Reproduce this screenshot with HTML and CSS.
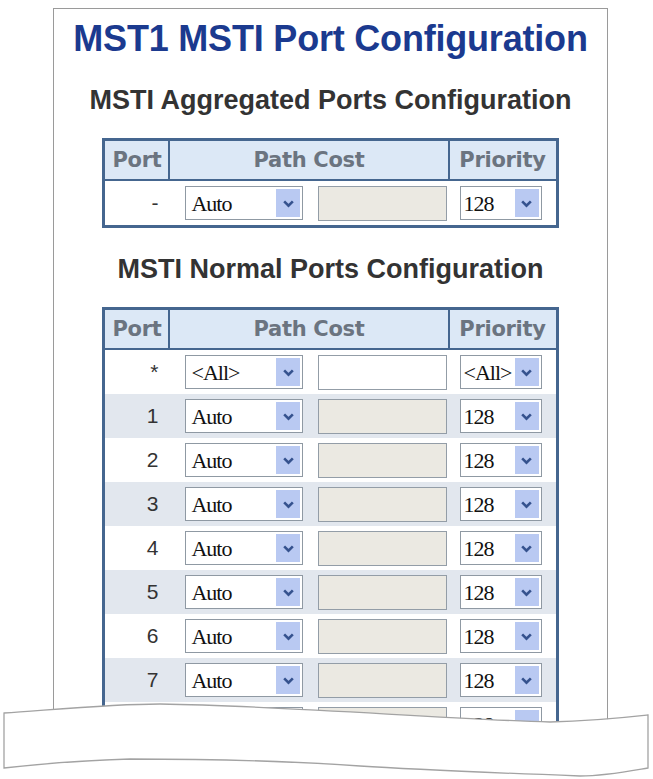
FILE: index.html
```html
<!DOCTYPE html>
<html lang="en">
<head>
  <meta charset="UTF-8">
  <meta name="viewport" content="width=device-width, initial-scale=1.0">
  <title>MST1 MSTI Port Configuration</title>
  <link rel="stylesheet" href="styles.css">
</head>
<body>
  <!-- page frame -->
  <div class="frame">
    <h1 class="title">MST1 MSTI Port Configuration</h1>

    <h2 class="subtitle">MSTI Aggregated Ports Configuration</h2>
    <table class="config">
      <colgroup>
        <col class="c-port"><col class="c-mode"><col class="c-value"><col class="c-prio">
      </colgroup>
      <thead>
        <tr><th>Port</th><th colspan="2">Path Cost</th><th class="last">Priority</th></tr>
      </thead>
      <tbody>
        <tr>
          <td class="port">-</td>
          <td class="mode"><div class="select wide"><span>Auto</span><i class="arrow"><svg viewBox="0 0 12 10"><path d="M2 3 L6 7 L10 3"/></svg></i></div></td>
          <td class="value"><div class="input off"></div></td>
          <td class="prio"><div class="select narrow"><span>128</span><i class="arrow"><svg viewBox="0 0 12 10"><path d="M2 3 L6 7 L10 3"/></svg></i></div></td>
        </tr>
      </tbody>
    </table>

    <h2 class="subtitle">MSTI Normal Ports Configuration</h2>
    <table class="config">
      <colgroup>
        <col class="c-port"><col class="c-mode"><col class="c-value"><col class="c-prio">
      </colgroup>
      <thead>
        <tr><th>Port</th><th colspan="2">Path Cost</th><th class="last">Priority</th></tr>
      </thead>
      <tbody>
        <tr>
          <td class="port star">*</td>
          <td class="mode"><div class="select wide"><span>&lt;All&gt;</span><i class="arrow"><svg viewBox="0 0 12 10"><path d="M2 3 L6 7 L10 3"/></svg></i></div></td>
          <td class="value"><div class="input"></div></td>
          <td class="prio"><div class="select narrow"><span>&lt;All&gt;</span><i class="arrow"><svg viewBox="0 0 12 10"><path d="M2 3 L6 7 L10 3"/></svg></i></div></td>
        </tr>
        <tr class="alt">
          <td class="port">1</td>
          <td class="mode"><div class="select wide"><span>Auto</span><i class="arrow"><svg viewBox="0 0 12 10"><path d="M2 3 L6 7 L10 3"/></svg></i></div></td>
          <td class="value"><div class="input off"></div></td>
          <td class="prio"><div class="select narrow"><span>128</span><i class="arrow"><svg viewBox="0 0 12 10"><path d="M2 3 L6 7 L10 3"/></svg></i></div></td>
        </tr>
        <tr>
          <td class="port">2</td>
          <td class="mode"><div class="select wide"><span>Auto</span><i class="arrow"><svg viewBox="0 0 12 10"><path d="M2 3 L6 7 L10 3"/></svg></i></div></td>
          <td class="value"><div class="input off"></div></td>
          <td class="prio"><div class="select narrow"><span>128</span><i class="arrow"><svg viewBox="0 0 12 10"><path d="M2 3 L6 7 L10 3"/></svg></i></div></td>
        </tr>
        <tr class="alt">
          <td class="port">3</td>
          <td class="mode"><div class="select wide"><span>Auto</span><i class="arrow"><svg viewBox="0 0 12 10"><path d="M2 3 L6 7 L10 3"/></svg></i></div></td>
          <td class="value"><div class="input off"></div></td>
          <td class="prio"><div class="select narrow"><span>128</span><i class="arrow"><svg viewBox="0 0 12 10"><path d="M2 3 L6 7 L10 3"/></svg></i></div></td>
        </tr>
        <tr>
          <td class="port">4</td>
          <td class="mode"><div class="select wide"><span>Auto</span><i class="arrow"><svg viewBox="0 0 12 10"><path d="M2 3 L6 7 L10 3"/></svg></i></div></td>
          <td class="value"><div class="input off"></div></td>
          <td class="prio"><div class="select narrow"><span>128</span><i class="arrow"><svg viewBox="0 0 12 10"><path d="M2 3 L6 7 L10 3"/></svg></i></div></td>
        </tr>
        <tr class="alt">
          <td class="port">5</td>
          <td class="mode"><div class="select wide"><span>Auto</span><i class="arrow"><svg viewBox="0 0 12 10"><path d="M2 3 L6 7 L10 3"/></svg></i></div></td>
          <td class="value"><div class="input off"></div></td>
          <td class="prio"><div class="select narrow"><span>128</span><i class="arrow"><svg viewBox="0 0 12 10"><path d="M2 3 L6 7 L10 3"/></svg></i></div></td>
        </tr>
        <tr>
          <td class="port">6</td>
          <td class="mode"><div class="select wide"><span>Auto</span><i class="arrow"><svg viewBox="0 0 12 10"><path d="M2 3 L6 7 L10 3"/></svg></i></div></td>
          <td class="value"><div class="input off"></div></td>
          <td class="prio"><div class="select narrow"><span>128</span><i class="arrow"><svg viewBox="0 0 12 10"><path d="M2 3 L6 7 L10 3"/></svg></i></div></td>
        </tr>
        <tr class="alt">
          <td class="port">7</td>
          <td class="mode"><div class="select wide"><span>Auto</span><i class="arrow"><svg viewBox="0 0 12 10"><path d="M2 3 L6 7 L10 3"/></svg></i></div></td>
          <td class="value"><div class="input off"></div></td>
          <td class="prio"><div class="select narrow"><span>128</span><i class="arrow"><svg viewBox="0 0 12 10"><path d="M2 3 L6 7 L10 3"/></svg></i></div></td>
        </tr>
        <tr>
          <td class="port">8</td>
          <td class="mode"><div class="select wide"><span>Auto</span><i class="arrow"><svg viewBox="0 0 12 10"><path d="M2 3 L6 7 L10 3"/></svg></i></div></td>
          <td class="value"><div class="input off"></div></td>
          <td class="prio"><div class="select narrow"><span>128</span><i class="arrow"><svg viewBox="0 0 12 10"><path d="M2 3 L6 7 L10 3"/></svg></i></div></td>
        </tr>
      </tbody>
    </table>
  </div>

  <!-- torn paper edge over the bottom -->
  <svg class="torn" viewBox="0 0 653 79">
    <path d="M4 13 C50 10 110 4 160 4 C290 6 440 19 550 22 C595 21 630 17 648 15 L648 68 C625 72 605 76 580 76 C500 73 420 70 360 66 C290 61 210 59 130 59 C70 61 30 65 4 68 Z"/>
  </svg>
</body>
</html>
```

FILE: styles.css
```css
* {
  margin: 0;
  padding: 0;
  box-sizing: border-box;
}

body {
  font-family: "Liberation Sans", Arial, sans-serif;
  background: #fff;
  color: #333;
  width: 653px;
  height: 779px;
  overflow: hidden;
  position: relative;
}

/* 页面框 */
.frame {
  margin: 8px 0 0 53px;
  width: 555px;
  height: 740px;
  border: 1px solid #9a9a9a;
  border-bottom: none;
  padding-top: 10px;
  overflow: hidden;
}

.title {
  font-size: 36px;
  line-height: 40px;
  font-weight: bold;
  color: #1b3a8f;
  text-align: center;
  letter-spacing: -0.2px;
}

.subtitle {
  font-size: 27px;
  line-height: 32px;
  font-weight: bold;
  color: #333;
  text-align: center;
  margin-top: 25px;
}

/* 配置表 */
.config {
  width: 456px;
  margin: 22px auto 0;
  border: 3px solid #45668f;
  border-spacing: 0;
  table-layout: fixed;
}

.c-port { width: 65px; }
.c-mode { width: 141px; }
.c-value { width: 138px; }
.c-prio { width: 106px; }

.config th {
  height: 40px;
  background: #dce8f6;
  color: #6b7480;
  font-family: "DejaVu Sans", Verdana, sans-serif;
  font-size: 21px;
  font-weight: bold;
  border-right: 2px solid #45668f;
  border-bottom: 2px solid #45668f;
  letter-spacing: -0.3px;
}

.config th.last {
  border-right: none;
}

.config td {
  height: 44px;
  vertical-align: middle;
}

.config tr.alt td {
  background: #e2e7ee;
}

.port {
  text-align: right;
  padding-right: 12px;
  font-size: 21px;
  color: #333;
}

.port.star {
  vertical-align: top;
  padding-top: 10px;
}

.mode { padding-left: 15px; }
.value { padding-left: 7px; }
.prio { padding-left: 10px; }

/* 下拉框 */
.select {
  height: 34px;
  border: 1px solid #8f99a3;
  background: #fff;
  padding: 2px;
  display: flex;
  align-items: stretch;
  font-family: "Liberation Serif", "Times New Roman", serif;
  font-size: 22px;
  color: #111;
  letter-spacing: -1px;
}

.select span {
  flex: 1;
  padding-left: 3px;
  line-height: 29px;
  white-space: nowrap;
}

.select.wide { width: 118px; }
.select.narrow { width: 82px; }
.select.narrow span { padding-left: 1px; }

.arrow {
  width: 24px;
  flex: none;
  background: #b9c9f2;
  display: flex;
  align-items: center;
  justify-content: center;
}

.arrow svg {
  width: 13px;
  height: 11px;
}

.arrow path {
  fill: none;
  stroke: #35528e;
  stroke-width: 2.4;
}

.input {
  width: 129px;
  height: 35px;
  border: 1px solid #939da7;
  background: #fff;
}

.input.off {
  background: #ebe9e2;
}

/* 撕纸边 */
.torn {
  position: absolute;
  left: 0;
  top: 700px;
  width: 653px;
  height: 79px;
}

.torn path {
  fill: #fff;
  stroke: #a3a3a3;
  stroke-width: 1.3;
}
```
